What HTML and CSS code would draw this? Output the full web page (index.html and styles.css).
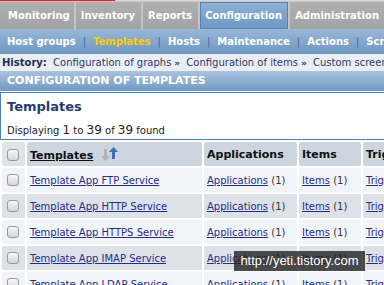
FILE: index.html
```html
<!DOCTYPE html>
<html lang="en">
<head>
  <meta charset="UTF-8" />
  <title>Configuration of templates</title>
  <link rel="stylesheet" href="styles.css">
</head>
<body>
  <div class="page">
    <div class="topline"></div>

    <!-- main menu -->
    <ul class="mainmenu">
      <li class="first">Monitoring</li>
      <li>Inventory</li>
      <li>Reports</li>
      <li class="active">Configuration</li>
      <li>Administration</li>
    </ul>

    <!-- sub menu -->
    <ul class="submenu">
      <li>Host groups</li>
      <li class="sep">|</li>
      <li class="selected">Templates</li>
      <li class="sep">|</li>
      <li>Hosts</li>
      <li class="sep">|</li>
      <li>Maintenance</li>
      <li class="sep">|</li>
      <li>Actions</li>
      <li class="sep">|</li>
      <li>Screens</li>
    </ul>

    <div class="history">
      <b>History:</b>
      <span>Configuration of graphs</span><span class="raquo">&raquo;</span>
      <span>Configuration of items</span><span class="raquo">&raquo;</span>
      <span>Custom screens</span>
    </div>

    <div class="pagehead">CONFIGURATION OF TEMPLATES</div>

    <div class="listbox">
      <h2>Templates</h2>
      <p class="found">Displaying <span class="num">1</span> to <span class="num">39</span> of <span class="num">39</span> found</p>
    </div>

    <table class="list">
      <colgroup>
        <col class="c-check"><col class="c-name"><col class="c-apps"><col class="c-items"><col class="c-trig">
      </colgroup>
      <tr class="head">
        <th class="chk"><span class="box"></span></th>
        <th><span class="sortlink">Templates</span>
          <svg class="sort" width="20" height="16" viewBox="0 0 20 16">
            <path d="M5 3v7H2l4.5 5L11 10H8V3z" fill="#b4b4b4"/>
            <path d="M13 13V6h-3l4.5-5L19 6h-3v7z" fill="#3a6fb8"/>
          </svg>
        </th>
        <th>Applications</th>
        <th>Items</th>
        <th>Triggers</th>
      </tr>
      <tr class="odd">
        <td class="chk"><span class="box"></span></td>
        <td><a href="#">Template App FTP Service</a></td>
        <td><a href="#">Applications</a> (1)</td>
        <td><a href="#">Items</a> (1)</td>
        <td><a href="#">Triggers</a> (1)</td>
      </tr>
      <tr class="even">
        <td class="chk"><span class="box"></span></td>
        <td><a href="#">Template App HTTP Service</a></td>
        <td><a href="#">Applications</a> (1)</td>
        <td><a href="#">Items</a> (1)</td>
        <td><a href="#">Triggers</a> (1)</td>
      </tr>
      <tr class="odd">
        <td class="chk"><span class="box"></span></td>
        <td><a href="#">Template App HTTPS Service</a></td>
        <td><a href="#">Applications</a> (1)</td>
        <td><a href="#">Items</a> (1)</td>
        <td><a href="#">Triggers</a> (1)</td>
      </tr>
      <tr class="even">
        <td class="chk"><span class="box"></span></td>
        <td><a href="#">Template App IMAP Service</a></td>
        <td><a href="#">Applications</a> (1)</td>
        <td><a href="#">Items</a> (1)</td>
        <td><a href="#">Triggers</a> (1)</td>
      </tr>
      <tr class="odd">
        <td class="chk"><span class="box"></span></td>
        <td><a href="#">Template App LDAP Service</a></td>
        <td><a href="#">Applications</a> (1)</td>
        <td><a href="#">Items</a> (1)</td>
        <td><a href="#">Triggers</a> (1)</td>
      </tr>
    </table>
  </div>

  <div class="watermark">http://yeti.tistory.com</div>
</body>
</html>
```

FILE: styles.css
```css
body {
  margin: 0;
  font-family: "DejaVu Sans", Verdana, sans-serif;
  font-size: 10px;
  color: #333;
  background: #fff;
  overflow: hidden;
}
.page {
  width: 560px;
}
.topline {
  height: 1px;
  background: linear-gradient(to right, #e8262a 0, #e8262a 115px, #d8d8d8 115px);
}
ul {
  list-style: none;
  margin: 0;
  padding: 0;
}

/* main menu */
.mainmenu {
  display: flex;
  gap: 2px;
  padding-top: 1px;
  background: #c4c4c4;
  height: 27px;
}
.mainmenu li {
  display: flex;
  align-items: center;
  padding: 0 6px 0 5px;
  background: linear-gradient(#b0b0b0, #a3a3a3);
  color: #fff;
  font-weight: bold;
  font-size: 10px;
}
.mainmenu li.first {
  padding: 0 4px 0 8px;
}
.mainmenu li.active {
  background: linear-gradient(#8db0d6, #6f98c4);
  border: 1px solid #5683b4;
  padding: 0 5px 0 4px;
}

/* sub menu */
.submenu {
  display: flex;
  align-items: center;
  height: 25px;
  padding-left: 7px;
  background: linear-gradient(#98b8d8, #6f96c0);
  color: #fff;
  font-weight: bold;
}
.submenu .sep {
  color: #44679a;
  font-weight: normal;
  padding: 0 7px;
}
.submenu .selected {
  color: #ffcc00;
}

.history {
  height: 17px;
  line-height: 17px;
  padding-left: 2px;
  background: #eaeef2;
  color: #2e3a6a;
  white-space: nowrap;
}
.history b {
  color: #1f2d52;
  margin-right: 3px;
}
.history .raquo {
  font-weight: bold;
  margin: 0 3px;
  font-size: 9px;
}

.pagehead {
  height: 20px;
  line-height: 20px;
  padding-left: 7px;
  background: linear-gradient(#a9c3de, #7099c4);
  color: #fff;
  font-weight: bold;
  font-size: 11px;
  border-bottom: 1px solid #fff;
}

.listbox {
  border: 1px solid #4f7fb3;
  height: 46px;
  padding: 0 6px;
}
.listbox h2 {
  margin: 5px 0 0;
  font-size: 13px;
  color: #1f3c73;
  line-height: 18px;
}
.found {
  margin: 7px 0 0;
  color: #222;
  line-height: 14px;
}
.found .num {
  font-size: 12px;
}

/* list table */
.list {
  border-spacing: 2px;
  table-layout: fixed;
  width: 560px;
}
.c-check { width: 23px; }
.c-name { width: 175px; }
.c-apps { width: 93px; }
.c-items { width: 62px; }
.list th, .list td {
  height: 24px;
  padding: 0 0 0 3px;
  text-align: left;
  white-space: nowrap;
  vertical-align: middle;
}
.list th {
  background: #cdd5de;
  color: #111;
  font-size: 11px;
  border-radius: 2px;
}
.list th.chk {
  background: #dde3ea;
}
.list .chk {
  padding-left: 5px;
}
.list tr.odd td {
  background: #f0f4f8;
}
.list tr.even td {
  background: #dde2e9;
}
.list a {
  color: #272c86;
  text-decoration: underline;
}
.sortlink {
  text-decoration: underline;
}
.sort {
  vertical-align: -3px;
  margin-left: 2px;
}
.box {
  display: inline-block;
  width: 10px;
  height: 10px;
  border: 1px solid #9b9b9b;
  border-radius: 3px;
  background: linear-gradient(#f8f8f8, #d4d4d4);
  vertical-align: middle;
}

.watermark {
  position: absolute;
  left: 234px;
  top: 251px;
  width: 131px;
  height: 20px;
  line-height: 20px;
  background: rgba(38, 38, 38, 0.82);
  color: #fff;
  font-family: "Liberation Sans", Arial, sans-serif;
  font-size: 13px;
  text-align: center;
}
```
